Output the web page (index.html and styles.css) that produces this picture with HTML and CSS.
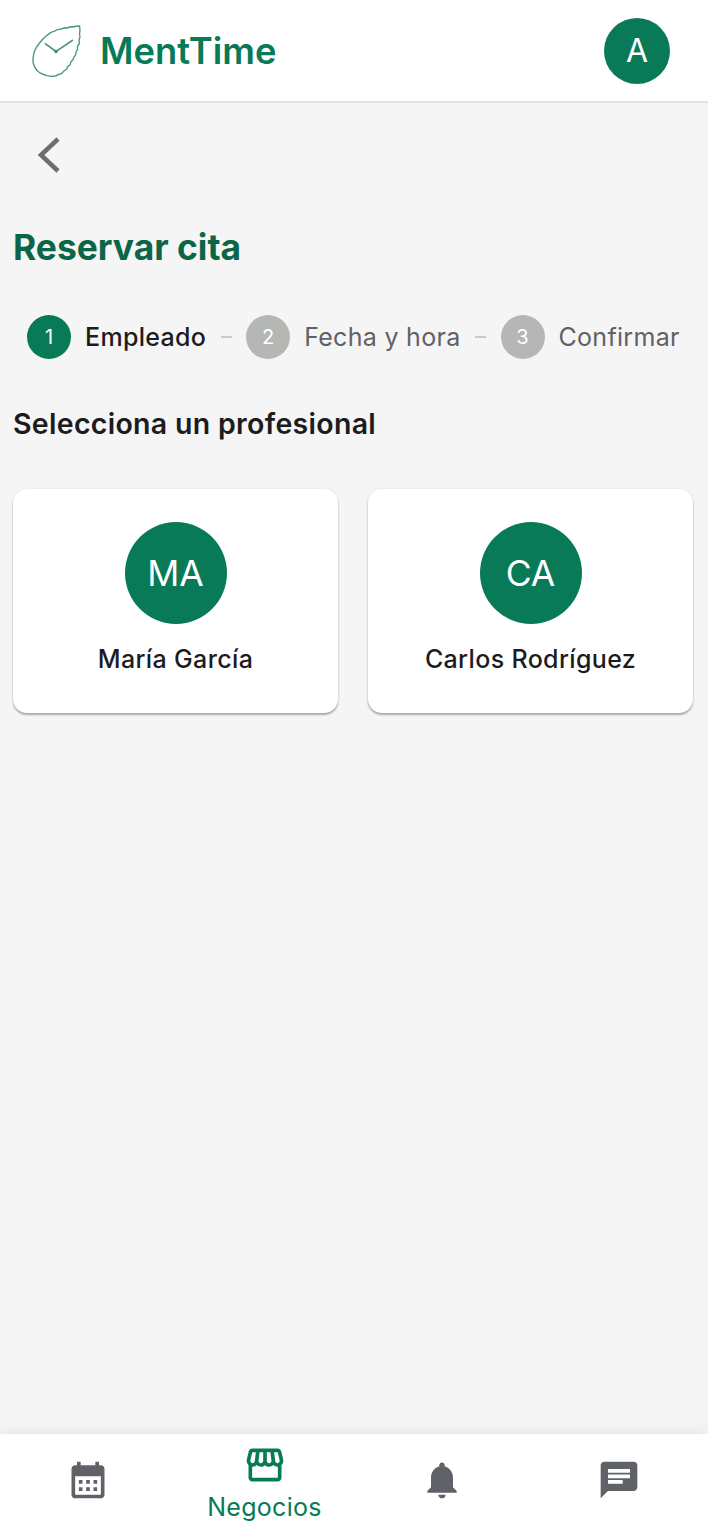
FILE: index.html
```html
<!DOCTYPE html>
<html lang="es">
<head>
    <meta charset="UTF-8">
    <meta name="viewport" content="width=device-width, initial-scale=1.0">
    <title>MentTime - Reservar cita</title>
    <link rel="stylesheet" href="styles.css">
</head>
<body>
    <header class="top-bar">
        <div class="brand">
            <svg class="brand-logo" viewBox="0 0 50 52">
                <path class="leaf" d="M47.500 1L44 1.200 41 2 38 1.800 35.500 3 32.500 2.800 29.500 4 25.500 4.600 22.500 6.200 19 7.400 16 9.600 13 12 10 15 7.500 18 5 21.500 3 25 1.700 29 1 33.500 1.200 38 2.600 42 5 45.500 8 48 11.500 49.500 15 50.600 19.500 51.400 23.500 51 26.500 49.500 29.500 48.600 32 46 34.500 44.200 36 41.300 38 39.800 39 36.800 40.800 34.800 42 32 43.500 30 44 27 45.500 24.500 45.500 21 47.500 18.500 47 15 48 12 47.500 9 48 5.500Z"/>
                <path class="hands" d="M13 18.500l11 8 17-11.500"/>
                <circle class="hub" cx="24" cy="26.500" r="1.800"/>
            </svg>
            <span class="brand-name">MentTime</span>
        </div>
        <div class="user-avatar">A</div>
    </header>

    <main class="content">
        <button class="back-button" aria-label="Volver">
            <svg viewBox="0 0 24 36"><path d="M22 2L5 18l17 16"/></svg>
        </button>

        <h1 class="page-title">Reservar cita</h1>

        <div class="stepper">
            <div class="step active"><span class="step-num">1</span><span class="step-label">Empleado</span></div>
            <span class="step-dash"></span>
            <div class="step"><span class="step-num">2</span><span class="step-label">Fecha y hora</span></div>
            <span class="step-dash"></span>
            <div class="step"><span class="step-num">3</span><span class="step-label">Confirmar</span></div>
        </div>

        <h2 class="section-title">Selecciona un profesional</h2>

        <div class="employee-grid">
            <div class="employee-card">
                <div class="employee-avatar">MA</div>
                <div class="employee-name">María García</div>
            </div>
            <div class="employee-card">
                <div class="employee-avatar">CA</div>
                <div class="employee-name">Carlos Rodríguez</div>
            </div>
        </div>
    </main>

    <nav class="bottom-nav">
        <div class="nav-item">
            <svg class="nav-icon" viewBox="0 0 24 24"><path d="M19 4h-1V2h-2v2H8V2H6v2H5c-1.100 0-2 .9-2 2v14c0 1.100.9 2 2 2h14c1.100 0 2-.9 2-2V6c0-1.100-.9-2-2-2zm0 16H5V10h14v10zM9 14H7v-2h2v2zm4 0h-2v-2h2v2zm4 0h-2v-2h2v2zm-8 4H7v-2h2v2zm4 0h-2v-2h2v2zm4 0h-2v-2h2v2z"/></svg>
        </div>
        <div class="nav-item active">
            <svg class="nav-icon" viewBox="0 0 24 24"><path d="M21.900 8.890l-1.050-4.370c-.22-.9-1-1.520-1.910-1.520H5.050c-.9 0-1.690.63-1.900 1.520L2.100 8.890c-.24 1.020-.02 2.060.62 2.880.08.11.19.19.28.29V19c0 1.100.9 2 2 2h14c1.100 0 2-.9 2-2v-6.940c.09-.09.2-.18.28-.28.64-.82.87-1.870.62-2.890zm-2.990-3.900l1.050 4.370c.1.42.01.84-.25 1.170-.14.18-.44.47-.94.47-.61 0-1.140-.49-1.210-1.140L16.980 5l1.930-.01zM13 5h1.960l.54 4.520c.05.39-.07.78-.33 1.070-.22.26-.54.41-.95.41-.67 0-1.220-.59-1.220-1.310V5zM8.490 9.520L9.040 5H11v4.690c0 .72-.55 1.310-1.290 1.310-.34 0-.65-.15-.89-.41-.25-.29-.37-.68-.33-1.070zm-4.450-.16L5.050 5h1.970l-.58 4.860c-.08.65-.6 1.140-1.210 1.140-.49 0-.8-.29-.93-.47-.27-.32-.36-.75-.26-1.170zM5 19v-6.030c.08.01.15.03.23.03.87 0 1.660-.36 2.240-.95.6.6 1.400.95 2.310.95.87 0 1.650-.36 2.230-.93.59.57 1.390.93 2.290.93.84 0 1.640-.35 2.240-.95.58.59 1.370.95 2.240.95.08 0 .15-.02.23-.03V19H5z"/></svg>
            <span class="nav-label">Negocios</span>
        </div>
        <div class="nav-item">
            <svg class="nav-icon" viewBox="0 0 24 24"><path d="M12 22c1.100 0 2-.9 2-2h-4c0 1.100.89 2 2 2zm6-6v-5c0-3.070-1.640-5.640-4.500-6.320V4c0-.83-.67-1.500-1.500-1.500s-1.500.67-1.500 1.500v.68C7.630 5.360 6 7.920 6 11v5l-2 2v1h16v-1l-2-2z"/></svg>
        </div>
        <div class="nav-item">
            <svg class="nav-icon" viewBox="0 0 24 24"><path d="M20 2H4c-1.100 0-1.990.9-1.990 2L2 22l4-4h14c1.100 0 2-.9 2-2V4c0-1.100-.9-2-2-2zM6 9h12v2H6V9zm8 5H6v-2h8v2zm4-6H6V6h12v2z"/></svg>
        </div>
    </nav>
</body>
</html>
```

FILE: styles.css
```css
* {
    box-sizing: border-box;
}
body {
    display: flex;
    flex-direction: column;
    min-height: 100vh;
    margin: 0;
    background-color: #f5f5f5;
    color: #1c1c1e;
    font-family: Inter, "Noto Sans", sans-serif;
}
.top-bar {
    display: flex;
    align-items: center;
    justify-content: space-between;
    height: 103px;
    padding: 0 38px 0 32px;
    background-color: #fff;
    border-bottom: 2px solid #e2e2e2;
}
.brand {
    display: flex;
    align-items: center;
    gap: 18px;
}
.brand-logo {
    width: 50px;
    height: 52px;
}
.leaf,
.hands {
    fill: none;
    stroke: #4c9a80;
    stroke-width: 1.400;
}
.hands {
    stroke-width: 1.600;
}
.hub {
    fill: #3c8f74;
}
.brand-name {
    color: #087a57;
    font-size: 36.300px;
    font-weight: 600;
}
.user-avatar {
    display: flex;
    align-items: center;
    justify-content: center;
    width: 66px;
    height: 66px;
    border-radius: 50%;
    background-color: #087a57;
    color: #fff;
    font-size: 32px;
}
.content {
    flex: 1;
    padding: 0 15px 0 13px;
}
.back-button {
    display: block;
    width: 24px;
    height: 36px;
    margin: 34px 0 0 23px;
    padding: 0;
    border: none;
    background: none;
}
.back-button svg {
    display: block;
    width: 24px;
    height: 36px;
    fill: none;
    stroke: #6d6e72;
    stroke-width: 4.500;
}
.page-title {
    margin: 53px 0 0;
    color: #0a6647;
    font-size: 35.400px;
    font-weight: 700;
    line-height: 43px;
}
.stepper {
    display: flex;
    align-items: center;
    gap: 14.500px;
    margin-top: 46px;
    padding-left: 14px;
}
.step {
    display: flex;
    align-items: center;
    gap: 14px;
}
.step-num {
    display: flex;
    align-items: center;
    justify-content: center;
    width: 44px;
    height: 44px;
    border-radius: 50%;
    background-color: #b5b7b5;
    color: #fff;
    font-size: 20px;
}
.step.active .step-num {
    background-color: #087a57;
}
.step-label {
    color: #5f6166;
    font-size: 25px;
    letter-spacing: 0.3px;
}
.step.active .step-label {
    color: #1c1c1e;
    font-weight: 500;
}
.step-dash {
    width: 11px;
    height: 2px;
    background-color: #c9c9c9;
}
.section-title {
    margin: 47px 0 0;
    font-size: 28.500px;
    font-weight: 600;
    line-height: 36px;
    letter-spacing: 0.3px;
}
.employee-grid {
    display: grid;
    grid-template-columns: 1fr 1fr;
    gap: 30px;
    margin-top: 47px;
}
.employee-card {
    display: flex;
    flex-direction: column;
    align-items: center;
    height: 224px;
    padding-top: 33px;
    border-radius: 14px;
    background-color: #fff;
    box-shadow: 0 2px 2px rgba(0, 0, 0, 0.3), 0 0 3px rgba(0, 0, 0, 0.08);
}
.employee-avatar {
    display: flex;
    align-items: center;
    justify-content: center;
    width: 102px;
    height: 102px;
    border-radius: 50%;
    background-color: #087a57;
    color: #fff;
    font-size: 35.500px;
}
.employee-name {
    margin-top: 20px;
    font-size: 25px;
    font-weight: 450;
    line-height: 30px;
    letter-spacing: 0.35px;
}
.bottom-nav {
    display: grid;
    grid-template-columns: repeat(4, 1fr);
    height: 101px;
    padding-bottom: 10px;
    background-color: #fff;
    box-shadow: 0 -2px 12px rgba(0, 0, 0, 0.07);
}
.nav-item {
    display: flex;
    flex-direction: column;
    align-items: center;
    justify-content: center;
}
.nav-item.active {
    justify-content: flex-start;
    padding-top: 9px;
}
.nav-icon {
    width: 44px;
    height: 44px;
    margin-right: 2px;
    fill: #5f6368;
}
.nav-item.active .nav-icon {
    fill: #087a57;
}
.nav-label {
    margin-top: 4px;
    margin-right: 2px;
    color: #087a57;
    font-size: 25px;
    line-height: 33px;
    letter-spacing: 0.3px;
}
```
